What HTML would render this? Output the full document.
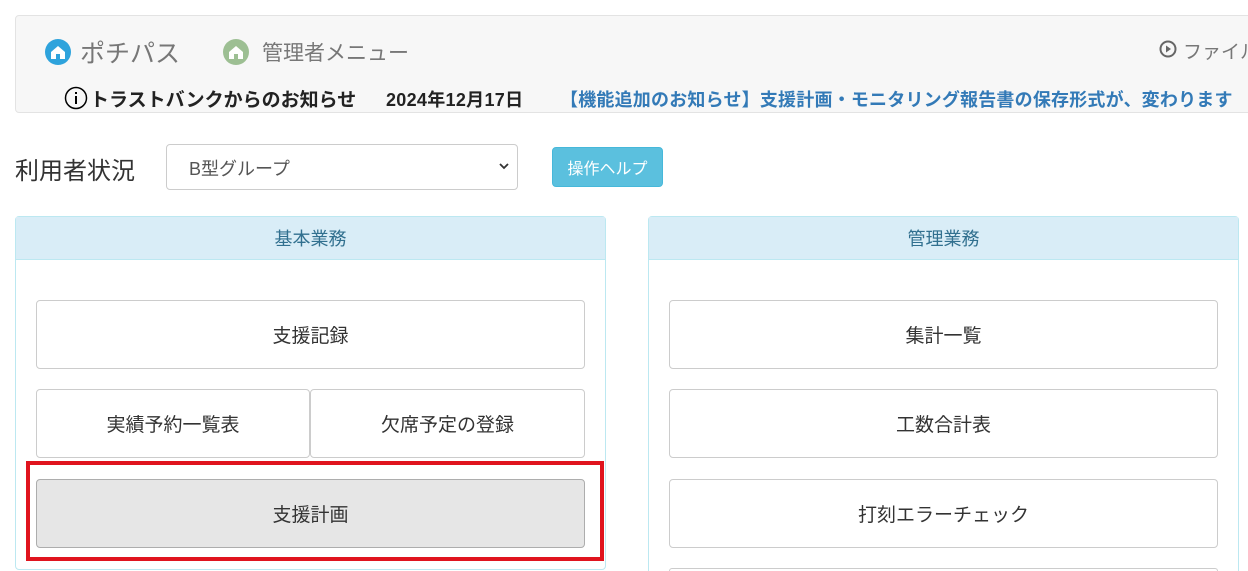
<!DOCTYPE html>
<html style="height:571px;overflow:hidden"><head><meta charset="utf-8"><style>
body{margin:0;width:1248px;height:571px;overflow:hidden;background:#fff;font-family:"Liberation Sans","Noto Sans CJK JP",sans-serif;color:#333;position:relative}
.a{position:absolute}
.hdr{left:15px;top:15px;width:1250px;height:96px;background:#f7f7f7;border:1px solid #e3e3e3;border-radius:4px}
.btn{position:absolute;border:1px solid #ccc;border-radius:4px;background:#fff;display:flex;align-items:center;justify-content:center;font-size:19px;color:#333;box-sizing:border-box}
.pan{position:absolute;top:216px;height:355px;border:1px solid #bce8f1;border-bottom:none;border-radius:4px 4px 0 0;box-sizing:border-box}
.ph{height:42px;background:#d9edf7;border-bottom:1px solid #bce8f1;display:flex;align-items:center;justify-content:center;font-size:18px;color:#31708f}
</style></head><body>
<div class="a hdr"></div>
<svg class="a" style="left:44px;top:38px" width="28" height="28" viewBox="0 0 28 28"><circle cx="14" cy="14" r="13" fill="#2ea3dc"/><path d="M7 14 L14 8 L21 14 V21 H7Z" fill="#fff"/><rect x="12" y="16" width="4" height="5" fill="#2ea3dc"/></svg>
<div class="a" style="left:80px;top:34px;font-size:25px;color:#777">ポチパス</div>
<svg class="a" style="left:222px;top:38px" width="28" height="28" viewBox="0 0 28 28"><circle cx="14" cy="14" r="13" fill="#9dbf93"/><path d="M7 14 L14 8 L21 14 V21 H7Z" fill="#fff"/><rect x="12" y="16" width="4" height="5" fill="#9dbf93"/></svg>
<div class="a" style="left:262px;top:37px;font-size:21px;color:#777">管理者メニュー</div>
<svg class="a" style="left:1159px;top:40px" width="18" height="18" viewBox="0 0 18 18"><circle cx="9" cy="9" r="7.5" fill="none" stroke="#666" stroke-width="2"/><path d="M7 5.5 L12 9 L7 12.5Z" fill="#666"/></svg>
<div class="a" style="left:1183px;top:37px;font-size:19px;color:#777;white-space:nowrap">ファイル</div>
<svg class="a" style="left:64px;top:86px" width="24" height="24" viewBox="0 0 24 24"><circle cx="12" cy="12" r="10.5" fill="none" stroke="#000" stroke-width="1.5"/><rect x="11" y="10" width="2" height="8"/><rect x="11" y="6" width="2" height="2"/></svg>
<div class="a" style="left:90px;top:85px;font-size:19px;font-weight:bold;color:#222;white-space:nowrap">トラストバンクからのお知らせ</div>
<div class="a" style="left:386px;top:86px;font-size:18px;font-weight:bold;color:#222;white-space:nowrap;letter-spacing:0.3px">2024年12月17日</div>
<div class="a" style="left:560px;top:86px;font-size:18px;font-weight:bold;color:#337ab7;white-space:nowrap;letter-spacing:0.2px">【機能追加のお知らせ】支援計画・モニタリング報告書の保存形式が、変わります</div>
<div class="a" style="left:15px;top:151px;font-size:24px;color:#333">利用者状況</div>
<div class="a" style="left:166px;top:144px;width:352px;height:46px;border:1px solid #ccc;border-radius:4px;box-sizing:border-box"></div>
<div class="a" style="left:189px;top:155px;font-size:18px;color:#555">B型グループ</div>
<svg class="a" style="left:498px;top:161px" width="12" height="10" viewBox="0 0 12 10"><path d="M2 3 L6 7 L10 3" fill="none" stroke="#333" stroke-width="1.8"/></svg>
<div class="a" style="left:552px;top:147px;width:111px;height:40px;background:#5bc0de;border:1px solid #46b8da;border-radius:4px;box-sizing:border-box;color:#fff;font-size:16px;display:flex;align-items:center;justify-content:center">操作ヘルプ</div>
<div class="pan" style="left:15px;width:591px;height:354px;border-bottom:1px solid #bce8f1;border-radius:4px"><div class="ph">基本業務</div></div>
<div class="pan" style="left:648px;width:591px"><div class="ph">管理業務</div></div>
<div class="btn" style="left:36px;top:300px;width:549px;height:69px">支援記録</div>
<div class="btn" style="left:36px;top:389px;width:274px;height:69px">実績予約一覧表</div>
<div class="btn" style="left:310px;top:389px;width:275px;height:69px">欠席予定の登録</div>
<div class="btn" style="left:36px;top:479px;width:549px;height:69px;background:#e6e6e6;border-color:#adadad">支援計画</div>
<div class="a" style="left:26px;top:461px;width:578px;height:100px;border:4px solid #e0141e;box-sizing:border-box"></div>
<div class="btn" style="left:669px;top:300px;width:549px;height:69px">集計一覧</div>
<div class="btn" style="left:669px;top:389px;width:549px;height:69px">工数合計表</div>
<div class="btn" style="left:669px;top:479px;width:549px;height:69px">打刻エラーチェック</div>
<div class="btn" style="left:669px;top:568px;width:549px;height:3px;border-bottom:none;border-radius:4px 4px 0 0"></div>
</body></html>
